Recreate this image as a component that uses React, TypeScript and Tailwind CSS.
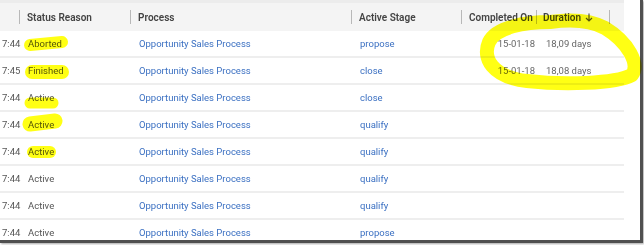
import React from "react";

interface Row {
    time: string;
    status: string;
    process: string;
    stage: string;
    completed?: string;
    duration?: string;
}

const rows: Row[] = [
    { time: "7:44", status: "Aborted", process: "Opportunity Sales Process", stage: "propose", completed: "15-01-18", duration: "18,09 days" },
    { time: "7:45", status: "Finished", process: "Opportunity Sales Process", stage: "close", completed: "15-01-18", duration: "18,08 days" },
    { time: "7:44", status: "Active", process: "Opportunity Sales Process", stage: "close" },
    { time: "7:44", status: "Active", process: "Opportunity Sales Process", stage: "qualify" },
    { time: "7:44", status: "Active", process: "Opportunity Sales Process", stage: "qualify" },
    { time: "7:44", status: "Active", process: "Opportunity Sales Process", stage: "qualify" },
    { time: "7:44", status: "Active", process: "Opportunity Sales Process", stage: "qualify" },
    { time: "7:44", status: "Active", process: "Opportunity Sales Process", stage: "propose" }
];

const cols = "grid grid-cols-[19px_111px_221px_110px_75px_73px_15px]";

function HeaderCell({ label, divider = true, children }: { label?: string; divider?: boolean; children?: React.ReactNode }) {
    return (
        <div className="flex h-full items-center whitespace-nowrap">
            {divider && <span className="h-[14px] w-px shrink-0 bg-[#b8b8b8]" />}
            {label && <span className="pl-[7px] font-semibold text-[#444]">{label}</span>}
            {children}
        </div>
    );
}

function Highlights() {
    return (
        <svg className="pointer-events-none absolute left-0 top-0 mix-blend-multiply" width="644" height="245" viewBox="0 0 644 245">
            <g stroke="#ffff14" strokeLinecap="round" strokeLinejoin="round" fill="none">
                <path d="M30 45 L62 42" strokeWidth="12" />
                <path d="M32 72 L62 72" strokeWidth="14" />
                <path d="M30 103 L53 103" strokeWidth="11" />
                <path d="M30 124 L55 121" strokeWidth="15" />
                <path d="M33 152 L50 152" strokeWidth="12" />
                <path
                    d="M550 22 C 525 22, 496 27, 489 42 C 482 58, 492 77, 527 81 C 562 85, 615 84, 632 75 C 640 64, 628 42, 605 28 C 592 21, 572 19, 550 22"
                    strokeWidth="14"
                />
            </g>
        </svg>
    );
}

export default function App() {
    return (
        <div className="relative h-[245px] w-[644px] overflow-hidden bg-white font-['Roboto',sans-serif] text-[9.5px]">
            <div className="h-[243px] w-[643px] overflow-hidden border-b-[3px] border-r-[3px] border-[#505050] bg-white shadow-[1px_1px_2px_rgba(0,0,0,0.35)]">
                <div className="w-[624px]">
                    <div className={`${cols} h-[31px] border-t-[3px] border-[#ececec] bg-[#f4f4f4] text-[10px]`}>
                        <HeaderCell divider={false} />
                        <HeaderCell label="Status Reason" />
                        <HeaderCell label="Process" />
                        <HeaderCell label="Active Stage" />
                        <HeaderCell label="Completed On" />
                        <HeaderCell>
                            <span className="pl-[6px] font-semibold text-[#444]">Duration</span>
                            <svg className="ml-[4px] mt-[1px]" width="8" height="9" viewBox="0 0 8 9" fill="none" stroke="#555" strokeWidth="1.2">
                                <path d="M4 0.5 V8 M1 5 L4 8 L7 5" />
                            </svg>
                        </HeaderCell>
                        <HeaderCell />
                    </div>
                    {rows.map((r, i) => (
                        <div key={i} className={`${cols} h-[27px] items-center border-b-2 border-[#eeeeee] pt-[2px] text-[#555]`}>
                            <span className="pl-[2px]">{r.time}</span>
                            <span className="pl-[9px]">{r.status}</span>
                            <span className="pl-[9px] text-[#3b70c2]">{r.process}</span>
                            <span className="pl-[9px] text-[#3b70c2]">{r.stage}</span>
                            <span className="pr-[1px] text-right text-[#666]">{r.completed}</span>
                            <span className="pl-[10px] text-[#666]">{r.duration}</span>
                            <span />
                        </div>
                    ))}
                </div>
            </div>
            <Highlights />
        </div>
    );
}
